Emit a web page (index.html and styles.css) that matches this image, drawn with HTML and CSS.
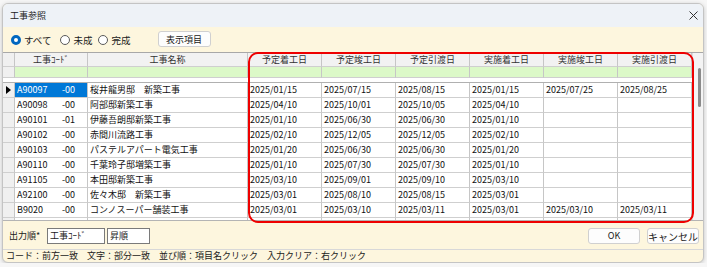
FILE: index.html
```html
<!DOCTYPE html>
<html lang="ja">
<head>
    <meta charset="UTF-8">
    <title>工事参照</title>
    <link rel="stylesheet" href="styles.css">
</head>
<body>
    <div id="window">
        <div class="titlebar">
            <span class="title">工事参照</span>
            <svg class="close" width="9" height="9" viewBox="0 0 9 9"><path d="M0.5 0.5 L8.5 8.5 M8.5 0.5 L0.5 8.5" stroke="#333" stroke-width="1"/></svg>
        </div>
        <div class="filterbar">
            <span class="radio on"></span><span class="rlabel">すべて</span>
            <span class="radio"></span><span class="rlabel">未成</span>
            <span class="radio"></span><span class="rlabel">完成</span>
            <button class="btn btn_items">表示項目</button>
        </div>

        <div id="grid_area">
            <div id="grid">
                <div class="row head">
                    <div class="cell rh"></div>
                    <div class="cell">工事ｺｰﾄﾞ</div>
                    <div class="cell">工事名称</div>
                    <div class="cell">予定着工日</div>
                    <div class="cell">予定竣工日</div>
                    <div class="cell">予定引渡日</div>
                    <div class="cell">実施着工日</div>
                    <div class="cell">実施竣工日</div>
                    <div class="cell">実施引渡日</div>
                </div>
                <div class="row filter">
                    <div class="cell rh"></div>
                    <div class="cell"></div><div class="cell"></div><div class="cell"></div><div class="cell"></div>
                    <div class="cell"></div><div class="cell"></div><div class="cell"></div><div class="cell"></div>
                </div>
                <div id="rows"></div>
            </div>
            <div class="scrollbar"><div class="thumb"></div></div>
            <div class="highlight"></div>
        </div>

        <div class="bottombar">
            <span class="olabel">出力順*</span>
            <input class="tb tb1" value="工事ｺｰﾄﾞ">
            <input class="tb tb2" value="昇順">
            <span class="spacer"></span>
            <button class="btn btn_ok">OK</button>
            <button class="btn btn_cancel">キャンセル</button>
        </div>
        <div class="statusbar">コード：前方一致　文字：部分一致　並び順：項目名クリック　入力クリア：右クリック</div>
    </div>

    <script>
        var data = [
            ["A90097","-00","桜井龍男邸　新築工事","2025/01/15","2025/07/15","2025/08/15","2025/01/15","2025/07/25","2025/08/25"],
            ["A90098","-00","阿部邸新築工事","2025/04/10","2025/10/01","2025/10/05","2025/04/10","",""],
            ["A90101","-01","伊藤吾朗邸新築工事","2025/01/10","2025/06/30","2025/06/30","2025/01/10","",""],
            ["A90102","-00","赤間川流路工事","2025/02/10","2025/12/05","2025/12/05","2025/02/10","",""],
            ["A90103","-00","パステルアパート電気工事","2025/01/20","2025/06/30","2025/06/30","2025/01/20","",""],
            ["A90110","-00","千葉玲子邸増築工事","2025/01/10","2025/07/30","2025/07/30","2025/01/10","",""],
            ["A91105","-00","本田邸新築工事","2025/03/10","2025/09/01","2025/09/10","2025/03/10","",""],
            ["A92100","-00","佐々木邸　新築工事","2025/03/01","2025/08/10","2025/08/15","2025/03/01","",""],
            ["B9020","-00","コンノスーパー舗装工事","2025/03/01","2025/03/10","2025/03/11","2025/03/01","2025/03/10","2025/03/11"],
            ["","","","","","","","",""]
        ];

        var rows = document.getElementById('rows');
        data.forEach(function(d, i){
            var html = '<div class="cell rh">' + (i == 0 ? '<span class="arrow"></span>' : '') + '</div>';
            html += '<div class="cell code' + (i == 0 ? ' selected' : '') + '"><span class="c1">' + d[0] + '</span><span>' + d[1] + '</span></div>';
            for (var j = 2; j < d.length; j++) {
                html += '<div class="cell">' + d[j] + '</div>';
            }
            var row = document.createElement('div');
            row.className = 'row';
            row.innerHTML = html;
            rows.appendChild(row);
        });
    </script>
</body>
</html>
```

FILE: styles.css
```css
*{
    box-sizing: border-box;
}

body{
    margin: 0;
    background-color: #f6f6f6;
    font-family: "Noto Sans CJK JP", "Noto Sans", sans-serif;
    font-size: 9px;
    color: #1a1a1a;
}

#window{
    width: 702px;
    margin: 3px 0 0 2px;
    border: 1px solid #c4c4c4;
    border-radius: 6px;
    overflow: hidden;
    background-color: #fdf6de;
    box-shadow: 0 1px 4px rgba(0,0,0,0.2);
}

.titlebar{
    height: 23px;
    display: flex;
    align-items: center;
    justify-content: space-between;
    padding: 0 4px 0 7px;
    background-color: #eef2f7;
}

.title{
    color: #222;
}

.close{
    margin-right: 1px;
}

.filterbar{
    height: 25px;
    display: flex;
    align-items: center;
    padding-left: 8px;
}

.radio{
    width: 10px;
    height: 10px;
    border: 1px solid #5a5a5a;
    border-radius: 50%;
    background-color: #fff;
}

.radio.on{
    border: 3px solid #0067c0;
}

.rlabel{
    margin: 0 6px 0 3px;
    font-size: 9.5px;
}

.rlabel:nth-of-type(2){
    margin-right: 9px;
}

.btn{
    font-family: "Noto Sans CJK JP", "Noto Sans", sans-serif;
    font-size: 9px;
    color: #1a1a1a;
    background-color: #fdfdfd;
    border: 1px solid #d0d0d0;
    border-radius: 3px;
    padding: 0;
    height: 16px;
}

.btn_items{
    width: 53px;
    margin-left: 21px;
    margin-top: -1px;
}

#grid_area{
    position: relative;
    display: flex;
    height: 168px;
    border-top: 1px solid #a8a8a8;
    background-color: #fff;
}

#grid{
    width: 689px;
    overflow: hidden;
}

.row{
    display: grid;
    grid-template-columns: 12px 73px 160px repeat(6, 74px);
    height: 15px;
}

.cell{
    border-right: 1px solid #c6c6c6;
    border-bottom: 1px solid #cfcfcf;
    padding-left: 2px;
    line-height: 14px;
    white-space: nowrap;
    overflow: hidden;
    color: #111;
}

.head{
    height: 14px;
    background-color: #f2f2f2;
}

.head .cell{
    text-align: center;
    padding-left: 0;
    line-height: 13px;
    color: #333;
}

.filter{
    height: 11px;
}

.filter .cell{
    background-color: #dcf9c8;
}

.filter .rh{
    background-color: #f0f0f0;
}

#rows{
    height: 138px;
    margin-top: 4px;
    border-top: 1px solid #b0b0b0;
    overflow: hidden;
}

.rh{
    background-color: #f0f0f0;
    padding: 0;
    position: relative;
}

.arrow{
    position: absolute;
    left: 3px;
    top: 3px;
    border-left: 5px solid #000;
    border-top: 4px solid transparent;
    border-bottom: 4px solid transparent;
}

.code .c1{
    display: inline-block;
    width: 45px;
}

.code.selected{
    background-color: #0078d7;
    color: #fff;
}

.scrollbar{
    width: 11px;
    background-color: #f4f4f4;
    border-left: 1px solid #dcdcdc;
    padding: 15px 0 0 5px;
}

.thumb{
    width: 3px;
    height: 39px;
    border-radius: 2px;
    background-color: #8a8a8a;
}

.highlight{
    position: absolute;
    left: 245px;
    top: -1px;
    width: 446px;
    height: 171px;
    border: 2.5px solid #ee0000;
    border-radius: 10px;
    z-index: 2;
}

.bottombar{
    height: 29px;
    display: flex;
    align-items: center;
    padding: 0 4px 0 6px;
    border-top: 1px solid #b4b4b4;
}

.olabel{
    width: 38px;
}

.tb{
    height: 16px;
    border: 1px solid #7a7a7a;
    background-color: #fff;
    font-family: "Noto Sans CJK JP", "Noto Sans", sans-serif;
    font-size: 9px;
    color: #1a1a1a;
    padding: 0 2px;
    margin-top: 1px;
}

.tb1{
    width: 58px;
}

.tb2{
    width: 43px;
    margin-left: 2px;
}

.spacer{
    flex: 1;
}

.btn_ok{
    width: 52px;
    margin-top: 1px;
}

.btn_cancel{
    width: 52px;
    margin-left: 7px;
    margin-top: 1px;
    font-size: 10px;
}

.statusbar{
    height: 13px;
    line-height: 12px;
    border-top: 1px solid #d8d8d8;
    padding-left: 3px;
    white-space: nowrap;
}
```
